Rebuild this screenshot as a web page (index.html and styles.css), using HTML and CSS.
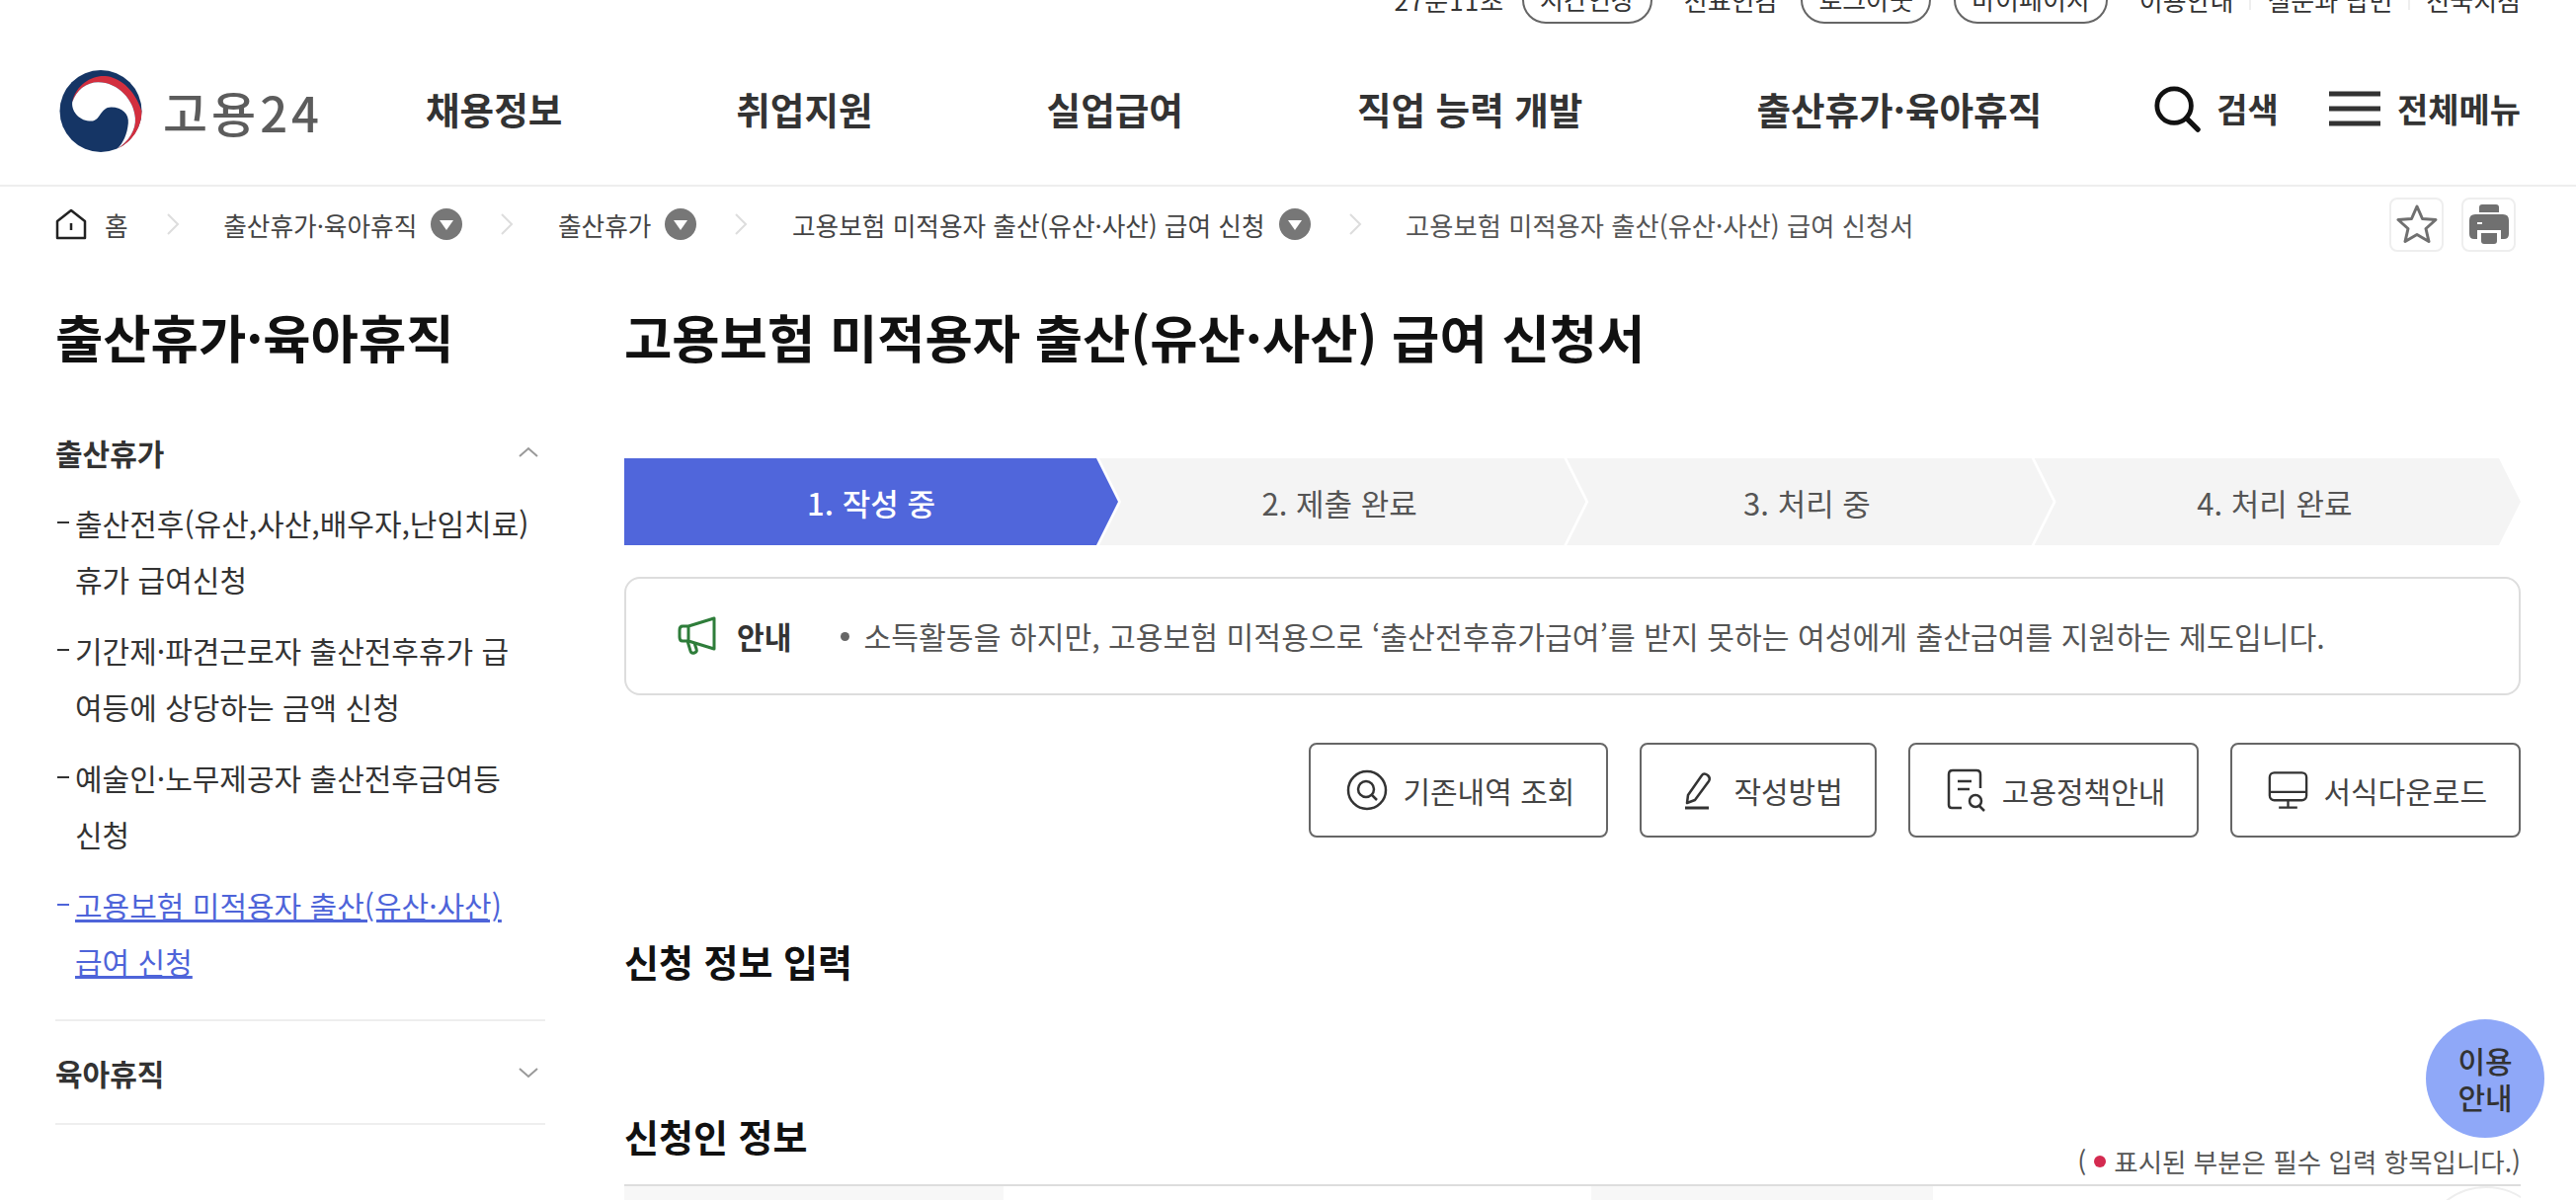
FILE: index.html
```html
<!DOCTYPE html>
<html lang="ko">
<head>
  <meta charset="UTF-8" />
  <meta name="viewport" content="width=device-width, initial-scale=1" />
  <title>고용보험 미적용자 출산(유산·사산) 급여 신청서 - 고용24</title>
  <link rel="stylesheet" href="styles.css">
</head>
<body>
  <header>
    <div class="util">
      <svg class="clock" width="30" height="30" viewBox="0 0 30 30"><circle cx="15" cy="0" r="13" fill="none" stroke="#555" stroke-width="3"/></svg>
      <span class="timer">27분11초</span>
      <a href="#" class="pill">시간연장</a>
      <a href="#" class="util-link">전표인감</a>
      <a href="#" class="pill">로그아웃</a>
      <a href="#" class="pill">마이페이지</a>
      <a href="#" class="util-link">이용안내</a>
      <i class="util-sep"></i>
      <a href="#" class="util-link">질문과 답변</a>
      <i class="util-sep"></i>
      <a href="#" class="util-link">전국지점</a>
    </div>
    <div class="gnb">
      <a href="#" class="logo">
        <svg width="86" height="83" viewBox="0 0 85 82">
          <circle cx="42.5" cy="41" r="41" fill="#153565"/>
          <path d="M14 32C18 14 34 5 47 6C60 7 76 18 83.500 41A41 41 0 0 1 59 78.500C70 72 78 60 77 48C76 30 60 12 40 12C28 12 18 20 14 32Z" fill="#d32f3f"/>
          <path d="M14 32C13 42 22 51 33 51C42 51 42 37 53 37C64 37 71 44 70 53C69 64 65 73 59 78.500C70 72 78 60 77 48C76 30 60 12 40 12C28 12 18 20 14 32Z" fill="#fff"/>
        </svg>
        <span>고용24</span>
      </a>
      <nav>
        <a href="#">채용정보</a>
        <a href="#">취업지원</a>
        <a href="#">실업급여</a>
        <a href="#">직업 능력 개발</a>
        <a href="#">출산휴가·육아휴직</a>
      </nav>
      <div class="gnb-tools">
        <a href="#" class="tool">
          <svg width="48" height="48" viewBox="0 0 50 50"><circle cx="22" cy="22" r="18" fill="none" stroke="#111" stroke-width="5"/><path d="M35 35L47 47" stroke="#111" stroke-width="5.500" stroke-linecap="round"/></svg>
          검색
        </a>
        <a href="#" class="tool">
          <svg width="54" height="36" viewBox="0 0 54 36"><path d="M1 3H53M1 18H53M1 33H53" stroke="#333" stroke-width="5"/></svg>
          전체메뉴
        </a>
      </div>
    </div>
  </header>

  <div class="crumbs">
    <svg class="home" width="32" height="32" viewBox="0 0 32 32"><path d="M2 13L16 2L30 13V30H2Z" fill="none" stroke="#222" stroke-width="2.500" stroke-linejoin="round"/><path d="M16 15V22" stroke="#222" stroke-width="2.500"/></svg>
    <span class="crumb-home">홈</span>
    <svg class="sep" width="14" height="24" viewBox="0 0 14 24"><path d="M2 2L12 12L2 22" fill="none" stroke="#ddd" stroke-width="2"/></svg>
    <span>출산휴가·육아휴직</span>
    <i class="drop"></i>
    <svg class="sep" width="14" height="24" viewBox="0 0 14 24"><path d="M2 2L12 12L2 22" fill="none" stroke="#ddd" stroke-width="2"/></svg>
    <span>출산휴가</span>
    <i class="drop"></i>
    <svg class="sep" width="14" height="24" viewBox="0 0 14 24"><path d="M2 2L12 12L2 22" fill="none" stroke="#ddd" stroke-width="2"/></svg>
    <span>고용보험 미적용자 출산(유산·사산) 급여 신청</span>
    <i class="drop"></i>
    <svg class="sep" width="14" height="24" viewBox="0 0 14 24"><path d="M2 2L12 12L2 22" fill="none" stroke="#ddd" stroke-width="2"/></svg>
    <span class="crumb-last">고용보험 미적용자 출산(유산·사산) 급여 신청서</span>
    <div class="crumb-tools">
      <a href="#" class="square">
        <svg width="42" height="40" viewBox="0 0 42 40"><path d="M21 2L26.500 14.500L40 15.500L30 24.500L33 37.500L21 30.500L9 37.500L12 24.500L2 15.500L15.500 14.500Z" fill="none" stroke="#707070" stroke-width="3" stroke-linejoin="round"/></svg>
      </a>
      <a href="#" class="square">
        <svg width="40" height="40" viewBox="0 0 40 40">
          <path d="M10 8V3Q10 0 13 0H27Q30 0 30 3V8Z" fill="#707070"/>
          <path d="M6 10H34Q40 10 40 16V30Q40 35 35 35H32V26H8V35H5Q0 35 0 30V16Q0 10 6 10Z" fill="#707070"/>
          <path d="M12 29H28V37Q28 40 25 40H15Q12 40 12 37Z" fill="#707070"/>
          <path d="M8 18H13V20H8Z" fill="#fff"/>
        </svg>
      </a>
    </div>
  </div>

  <div class="wrap">
    <aside>
      <h2>출산휴가·육아휴직</h2>
      <div class="side-head open">
        <span>출산휴가</span>
        <svg width="22" height="12" viewBox="0 0 22 12"><path d="M2 10L11 2L20 10" fill="none" stroke="#999" stroke-width="2"/></svg>
      </div>
      <ul>
        <li><a href="#">출산전후(유산,사산,배우자,난임치료) 휴가 급여신청</a></li>
        <li><a href="#">기간제·파견근로자 출산전후휴가 급여등에 상당하는 금액 신청</a></li>
        <li><a href="#">예술인·노무제공자 출산전후급여등 신청</a></li>
        <li class="on"><a href="#">고용보험 미적용자 출산(유산·사산) 급여 신청</a></li>
      </ul>
      <div class="side-head closed">
        <span>육아휴직</span>
        <svg width="22" height="12" viewBox="0 0 22 12"><path d="M2 2L11 10L20 2" fill="none" stroke="#999" stroke-width="2"/></svg>
      </div>
    </aside>

    <main>
      <h1>고용보험 미적용자 출산(유산·사산) 급여 신청서</h1>

      <div class="steps">
        <div class="step on">1. 작성 중</div>
        <div class="step">2. 제출 완료</div>
        <div class="step">3. 처리 중</div>
        <div class="step">4. 처리 완료</div>
      </div>

      <div class="notice">
        <svg width="42" height="42" viewBox="0 0 42 42"><path d="M37 3V34L11 26H5Q2 26 2 22V15Q2 11 5 11H11Z M11 11V26 M10 26L13 36Q14 39 17 38Q20 37 19 34L17 28" fill="none" stroke="#2e7d3a" stroke-width="3" stroke-linejoin="round"/></svg>
        <strong>안내</strong>
        <p>소득활동을 하지만, 고용보험 미적용으로 ‘출산전후휴가급여’를 받지 못하는 여성에게 출산급여를 지원하는 제도입니다.</p>
      </div>

      <div class="actions">
        <a href="#" class="btn">
          <svg width="42" height="42" viewBox="0 0 42 42"><circle cx="21" cy="21" r="19" fill="none" stroke="#333" stroke-width="2.500"/><circle cx="20" cy="20" r="8" fill="none" stroke="#333" stroke-width="2.500"/><path d="M26 26L31 31" stroke="#333" stroke-width="2.500"/></svg>
          기존내역 조회
        </a>
        <a href="#" class="btn">
          <svg width="42" height="42" viewBox="0 0 42 42"><path d="M11 26L25 6Q27 3 31 6Q34 9 32 12L18 31L10 34Z" fill="none" stroke="#333" stroke-width="2.500" stroke-linejoin="round"/><path d="M8 39H32" stroke="#333" stroke-width="3"/></svg>
          작성방법
        </a>
        <a href="#" class="btn">
          <svg width="42" height="44" viewBox="0 0 42 44"><path d="M16 40H6Q3 40 3 37V6Q3 2 7 2H31Q35 2 35 6V20" fill="none" stroke="#333" stroke-width="2.500"/><path d="M12 13H26M12 21H24" stroke="#333" stroke-width="2.500"/><circle cx="30" cy="33" r="6" fill="none" stroke="#333" stroke-width="2.500"/><path d="M34 38L39 43" stroke="#333" stroke-width="2.500"/></svg>
          고용정책안내
        </a>
        <a href="#" class="btn">
          <svg width="41" height="42" viewBox="0 0 44 42"><rect x="2" y="2" width="40" height="30" rx="5" fill="none" stroke="#333" stroke-width="2.500"/><path d="M2 23H42M22 32V40M12 40H32" stroke="#333" stroke-width="2.500"/></svg>
          서식다운로드
        </a>
      </div>

      <h3 class="sec-first">신청 정보 입력</h3>

      <div class="sec-head">
        <h3>신청인 정보</h3>
        <p class="req">( <i class="dot"></i> 표시된 부분은 필수 입력 항목입니다.)</p>
      </div>
      <div class="form-table">
        <div class="th th-a"></div>
        <div class="td td-a"></div>
        <div class="th th-b"></div>
        <div class="td td-b"><i class="round"></i></div>
      </div>
    </main>
  </div>

  <a href="#" class="guide">이용<br>안내</a>
</body>
</html>
```

FILE: styles.css
```css
* {
  margin: 0;
  padding: 0;
  box-sizing: border-box;
}
html, body {
  height: 1216px;
  overflow: hidden;
}
body {
  font-family: "Noto Sans CJK KR", "Noto Sans", sans-serif;
  color: #333;
  background: #fff;
}
a {
  color: inherit;
  text-decoration: none;
}
ul {
  list-style: none;
}
i {
  display: block;
  font-style: normal;
}

/* header */
header {
  display: flow-root;
  height: 189px;
  border-bottom: 2px solid #eee;
}
.util {
  display: flex;
  justify-content: flex-end;
  align-items: center;
  height: 50px;
  margin-top: -26px;
  padding-right: 56px;
  font-size: 26px;
  color: #333;
}
.clock {
  margin-right: 18px;
}
.timer {
  letter-spacing: 1px;
}
.pill {
  height: 50px;
  line-height: 46px;
  margin-left: 23px;
  padding: 0 16px;
  border: 2px solid #666;
  border-radius: 24px;
}
.timer + .pill {
  margin-left: 18px;
}
.util-link {
  margin-left: 32px;
}
.util-sep + .util-link {
  margin-left: 0;
}
.util-sep {
  width: 2px;
  height: 22px;
  background: #eee;
  margin: 0 16px;
}
.gnb {
  display: flex;
  align-items: center;
  height: 164px;
  padding: 7px 56px 0 59px;
}
.logo {
  display: flex;
  align-items: center;
  gap: 20px;
  width: 372px;
  margin-top: 5px;
  font-size: 49px;
  font-weight: 500;
  letter-spacing: 4px;
  color: #5c5c5c;
}
nav {
  display: flex;
  gap: 176px;
  font-size: 37.600px;
  font-weight: 700;
}
.gnb-tools {
  display: flex;
  align-items: center;
  gap: 50px;
  margin-left: auto;
}
.tool {
  display: flex;
  align-items: center;
  gap: 16px;
  font-size: 34px;
  font-weight: 700;
}

/* breadcrumb */
.crumbs {
  display: flex;
  align-items: center;
  height: 76px;
  padding: 0 56px;
  font-size: 25.700px;
  color: #444;
}
.crumb-home {
  margin-left: 18px;
}
.crumb-last {
  font-size: 26.300px;
  color: #555;
}
.sep {
  margin: 0 44.500px 0 38px;
}
.drop {
  width: 32px;
  height: 32px;
  margin-left: 14px;
  border-radius: 50%;
  background: #777;
  position: relative;
}
.drop::after {
  content: "";
  position: absolute;
  left: 9px;
  top: 12px;
  border: 7px solid transparent;
  border-top: 10px solid #fff;
  border-bottom: 0;
}
.crumb-tools {
  display: flex;
  gap: 18px;
  margin-left: auto;
  margin-right: 5px;
}
.square {
  display: flex;
  align-items: center;
  justify-content: center;
  width: 55px;
  height: 55px;
  border: 2px solid #eee;
  border-radius: 8px;
}

/* layout */
.wrap {
  display: flex;
  padding: 0 56px;
}
aside {
  flex: none;
  width: 496px;
  margin-right: 80px;
}
main {
  flex: 1;
}
aside h2 {
  font-size: 52.500px;
  font-weight: 700;
  line-height: 76px;
  margin-top: 37px;
  color: #111;
}
.side-head {
  display: flex;
  justify-content: space-between;
  align-items: center;
  padding-right: 6px;
  font-size: 30px;
  font-weight: 700;
}
.side-head.open {
  margin-top: 58px;
  height: 44px;
}
.side-head.closed {
  height: 107px;
  border-top: 2px solid #eee;
  border-bottom: 2px solid #eee;
}
aside ul {
  margin-top: 21px;
  padding-bottom: 15px;
}
aside li {
  position: relative;
  padding: 0 12px 0 20px;
  font-size: 30px;
  line-height: 57px;
  margin-bottom: 15px;
  word-break: break-all;
}
aside li::before {
  content: "";
  position: absolute;
  left: 2px;
  top: 27px;
  width: 12px;
  height: 2px;
  background: #333;
}
aside li.on {
  color: #4e64d9;
}
aside li.on a {
  text-decoration: underline;
}
aside li.on::before {
  background: #4e64d9;
}

/* title and steps */
h1 {
  font-size: 52.500px;
  font-weight: 700;
  line-height: 76px;
  margin-top: 37px;
  color: #111;
}
.steps {
  display: flex;
  margin-top: 86px;
}
.step {
  flex: 1;
  height: 88px;
  margin-left: -19px;
  padding-right: 6px;
  display: flex;
  align-items: center;
  justify-content: center;
  font-size: 31px;
  color: #555;
  background: #f4f4f4;
  clip-path: polygon(0 0, calc(100% - 22px) 0, 100% 50%, calc(100% - 22px) 100%, 0 100%, 22px 50%);
}
.step.on {
  flex: none;
  width: 500px;
  margin-left: 0;
  padding-right: 0;
  color: #fff;
  font-weight: 500;
  background: #5066db;
  clip-path: polygon(0 0, calc(100% - 22px) 0, 100% 50%, calc(100% - 22px) 100%, 0 100%);
}

/* notice */
.notice {
  display: flex;
  align-items: center;
  height: 120px;
  margin-top: 32px;
  padding-left: 52px;
  border: 2px solid #ddd;
  border-radius: 16px;
  font-size: 30.200px;
}
.notice strong {
  margin-left: 18px;
  font-weight: 700;
}
.notice p {
  position: relative;
  margin-left: 73px;
  color: #555;
  white-space: nowrap;
}
.notice p::before {
  content: "";
  position: absolute;
  left: -24px;
  top: 18px;
  width: 9px;
  height: 9px;
  border-radius: 50%;
  background: #666;
}

/* buttons */
.actions {
  display: flex;
  justify-content: flex-end;
  gap: 32px;
  margin-top: 48px;
}
.btn {
  display: flex;
  align-items: center;
  gap: 15px;
  height: 96px;
  padding: 0 32px 0 36px;
  border: 2px solid #666;
  border-radius: 8px;
  font-size: 30px;
  color: #444;
}

/* form */
h3 {
  font-size: 38px;
  font-weight: 700;
  color: #111;
}
.sec-first {
  margin-top: 98px;
  line-height: 54px;
}
.sec-head {
  display: flex;
  justify-content: space-between;
  align-items: flex-end;
  margin-top: 122px;
}
.sec-head h3 {
  padding-bottom: 19px;
}
.req {
  display: flex;
  align-items: center;
  gap: 8px;
  font-size: 26.500px;
  color: #555;
  line-height: 40px;
}
.dot {
  width: 12px;
  height: 12px;
  border-radius: 50%;
  background: #d42a50;
}
.form-table {
  display: grid;
  grid-template-columns: 384px 595px 346px 1fr;
  height: 16px;
  overflow: hidden;
  margin-top: 3px;
  border-top: 2px solid #ddd;
}
.th {
  background: #f7f7f7;
}
.td-b {
  display: flex;
  justify-content: flex-end;
}
.round {
  flex: none;
  width: 132px;
  height: 132px;
  margin-right: -31px;
  border: 2px solid #eee;
  border-radius: 50%;
}

/* floating help */
.guide {
  position: fixed;
  left: 2456px;
  top: 1032px;
  display: flex;
  align-items: center;
  justify-content: center;
  width: 120px;
  height: 120px;
  border-radius: 50%;
  background: #8fa8f8;
  font-size: 30px;
  font-weight: 500;
  line-height: 37px;
  text-align: center;
  color: #333;
}
```
